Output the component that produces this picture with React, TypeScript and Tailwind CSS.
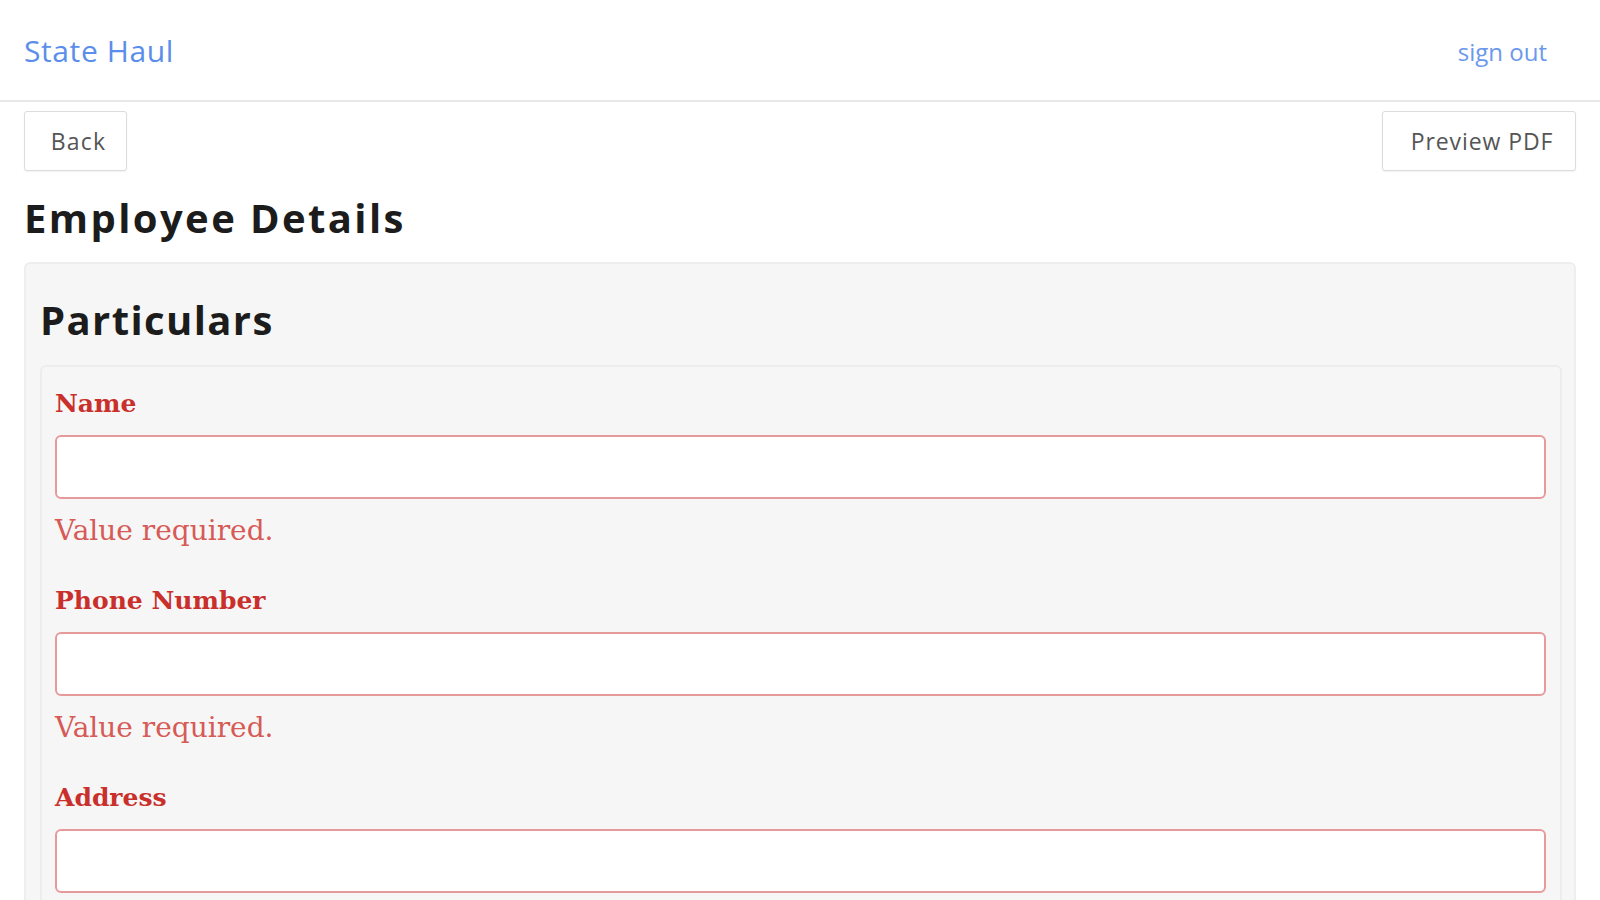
import React, { useState } from 'react';

type Field = {
  key: string;
  label: string;
};

const FIELDS: Field[] = [
  { key: 'name', label: 'Name' },
  { key: 'phone', label: 'Phone Number' },
  { key: 'address', label: 'Address' },
];

const sans = "font-['Open_Sans','Noto_Sans',sans-serif]";
const serif = "font-['DejaVu_Serif','Liberation_Serif',serif]";

const App: React.FC = () => {
  const [values, setValues] = useState<Record<string, string>>({});

  return (
    <div className={`min-h-screen bg-white ${sans}`}>
      <header className="h-[102px] border-b-2 border-[#e8e8e8] flex items-center justify-between pl-6 pr-[53px]">
        <a className="text-[30px] leading-none tracking-[0.02em] text-[#5b8eea] pt-[2px]">State Haul</a>
        <a className="text-[24px] leading-none text-[#6b98ec] pt-[4px]">sign out</a>
      </header>

      <div className="px-6">
        <div className="flex justify-between mt-[9px]">
          <button
            type="button"
            className="w-[103px] h-[60px] bg-white border border-[#dcdcdc] rounded-[3px] shadow-[0_1px_2px_rgba(0,0,0,0.06)] text-[23px] tracking-[0.05em] text-[#555] pl-[6px]"
          >
            Back
          </button>
          <button
            type="button"
            className="w-[194px] h-[60px] bg-white border border-[#dcdcdc] rounded-[3px] shadow-[0_1px_2px_rgba(0,0,0,0.06)] text-[23px] tracking-[0.04em] text-[#555] pl-[6px]"
          >
            Preview PDF
          </button>
        </div>

        <h1 className="mt-[23px] text-[40px] leading-[48px] font-bold tracking-[0.06em] text-[#1c1c1c]">
          Employee Details
        </h1>

        <section className="mt-[20px] bg-[#f6f6f6] border-2 border-[#eeeeee] rounded-md pl-[14px] pr-[12px] pt-[32px] pb-6">
          <h2 className="text-[40px] leading-[48px] font-bold tracking-[0.035em] text-[#1c1c1c]">Particulars</h2>

          <div className="mt-[21px] border-2 border-[#ececec] rounded-md pl-[13px] pr-[14px] pt-[19px]">
            {FIELDS.map(f => (
              <div key={f.key} className="mb-[34px]">
                <label className={`block text-[25px] leading-9 font-bold text-[#c9302c] ${serif}`}>
                  {f.label}
                </label>
                <input
                  type="text"
                  value={values[f.key] ?? ''}
                  onChange={e => setValues(v => ({ ...v, [f.key]: e.target.value }))}
                  className="mt-[13px] block w-full h-[64px] bg-white border-2 border-[#e79a9a] rounded-md px-3 outline-none"
                />
                {!values[f.key] && (
                  <p className={`mt-[14px] text-[28px] leading-9 text-[#d65a56] ${serif}`}>
                    Value required.
                  </p>
                )}
              </div>
            ))}
          </div>
        </section>
      </div>
    </div>
  );
};

export default App;
